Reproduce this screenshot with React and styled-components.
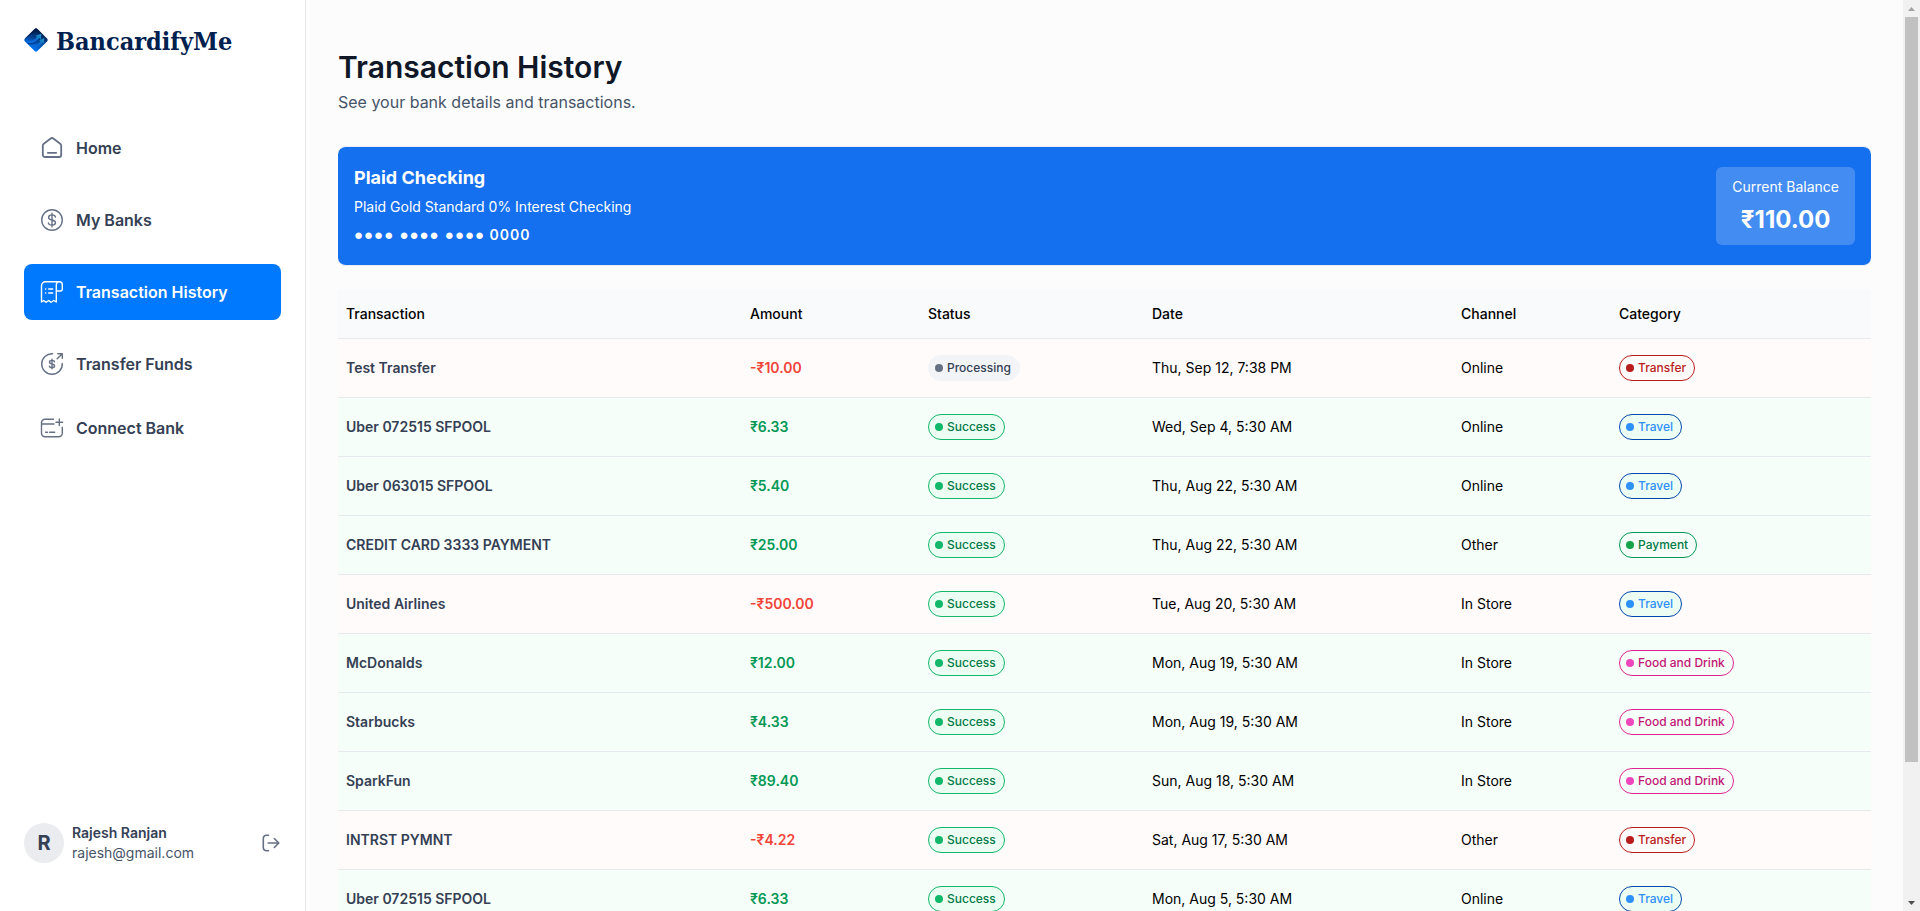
import React from "react";
import styled, { createGlobalStyle, css } from "styled-components";

const GlobalStyle = createGlobalStyle`
  *, *::before, *::after { box-sizing: border-box; }
  body {
    margin: 0;
    background: #ffffff;
    font-family: Inter, "Liberation Sans", sans-serif;
    color: #101828;
  }
  h1, h2, p { margin: 0; }
  button { font: inherit; color: inherit; border: 0; background: none; padding: 0; cursor: pointer; }
`;

const Layout = styled.div`
  display: flex;
  height: 100vh;
  overflow: hidden;
`;

const Sidebar = styled.aside`
  display: flex;
  flex-direction: column;
  flex: none;
  width: 306px;
  padding: 24px;
  border-right: 1px solid #e5e7eb;
  background: #ffffff;
`;

const Brand = styled.a`
  display: flex;
  align-items: center;
  gap: 8px;
  height: 36px;
  color: #00214f;
  text-decoration: none;
`;

const BrandMark = styled.svg`
  width: 24px;
  height: 28px;
  padding-bottom: 4px;
`;

const BrandName = styled.span`
  font: bold 25px/36px "DejaVu Serif Condensed", "DejaVu Serif", serif;
`;

const Nav = styled.nav`
  display: flex;
  flex-direction: column;
  gap: 16px;
  margin-top: 60px;
`;

const navItem = css`
  display: flex;
  align-items: center;
  gap: 12px;
  padding: 0 16px;
  border-radius: 8px;
  font-size: 16px;
  font-weight: 600;
  line-height: 24px;
  color: #344054;
  svg { flex: none; width: 24px; height: 24px; color: #667085; }
`;

const NavLink = styled.a`
  ${navItem}
  height: 56px;
  text-decoration: none;
  ${({ $active }) => $active && css`
    background: #0179fe;
    color: #ffffff;
    svg { color: #ffffff; }
  `}
`;

const NavButton = styled.button`
  && { ${navItem} }
  height: 40px;
`;

const Profile = styled.footer`
  display: flex;
  align-items: center;
  gap: 8px;
  margin-top: auto;
  padding-bottom: 24px;
`;

const Avatar = styled.div`
  display: grid;
  place-items: center;
  width: 40px;
  height: 40px;
  border-radius: 50%;
  background: #eaecf0;
  font-size: 20px;
  font-weight: 700;
  color: #344054;
`;

const ProfileText = styled.div`
  flex: 1;
  font-size: 14px;
  line-height: 20px;
  color: #475467;
`;

const ProfileName = styled.p`
  font-weight: 600;
  color: #344054;
`;

const LogoutButton = styled.button`
  display: flex;
  color: #667085;
  svg { width: 20px; height: 20px; }
`;

const Main = styled.main`
  flex: 1;
  min-width: 0;
  overflow-y: auto;
  scrollbar-width: none;
  padding: 48px 32px;
  background: #fcfcfd;
`;

const Title = styled.h1`
  font-size: 30px;
  font-weight: 600;
  line-height: 38px;
`;

const Subtitle = styled.p`
  margin-top: 4px;
  font-size: 16px;
  line-height: 24px;
  color: #475467;
`;

const AccountCard = styled.section`
  display: flex;
  align-items: center;
  justify-content: space-between;
  margin: 32px 0 24px;
  padding: 20px 16px;
  border: solid #eaecf0;
  border-width: 1px 0;
  border-radius: 8px;
  background: #1570ef;
  color: #ffffff;
  font-size: 14px;
`;

const AccountText = styled.div`
  display: flex;
  flex-direction: column;
  gap: 8px;
  line-height: 20px;
`;

const AccountName = styled.h2`
  font-size: 18px;
  font-weight: 700;
  line-height: 22px;
`;

const AccountNumber = styled.p`
  font-weight: 600;
  letter-spacing: 1px;
`;

const MaskedDigits = styled.span`
  font-family: "Liberation Sans", sans-serif;
  font-size: 15px;
`;

const Balance = styled.div`
  display: flex;
  flex-direction: column;
  align-items: center;
  gap: 8px;
  padding: 10px 16px;
  border-radius: 6px;
  background: rgba(255, 255, 255, 0.2);
  line-height: 20px;
`;

const BalanceAmount = styled.p`
  font-size: 24px;
  font-weight: 700;
  line-height: 30px;
`;

const Table = styled.table`
  width: 100%;
  table-layout: fixed;
  border-collapse: collapse;
  font-size: 14px;
  line-height: 20px;
  color: #000000;
`;

const HeadCell = styled.th`
  height: 48px;
  padding: 0 8px;
  border-bottom: 1px solid #e7e9ee;
  background: #f9fafb;
  font-weight: 500;
  text-align: left;
`;

const Row = styled.tr`
  background: ${({ $debit }) => ($debit ? "#fffbfa" : "#f6fef9")};
  border-bottom: 1px solid #e7e9ee;
`;

const Cell = styled.td`
  height: 59px;
  padding: 0 8px;
`;

const NameCell = styled(Cell)`
  font-weight: 600;
  color: #344054;
`;

const AmountCell = styled(Cell)`
  font-weight: 600;
  color: ${({ $debit }) => ($debit ? "#f04438" : "#039855")};
`;

const badgeTones = {
  Processing: { border: "#f2f4f7", fill: "#f2f4f7", dot: "#667085", text: "#344054" },
  Success: { border: "#12b76a", fill: "#ecfdf3", dot: "#12b76a", text: "#027a48" },
  Transfer: { border: "#b91c1c", fill: "transparent", dot: "#b91c1c", text: "#b91c1c" },
  Travel: { border: "#0047ab", fill: "#ecfdf3", dot: "#2e90fa", text: "#2e90fa" },
  Payment: { border: "#039855", fill: "transparent", dot: "#16a34a", text: "#027a48" },
  "Food and Drink": { border: "#dd2590", fill: "transparent", dot: "#ee46bc", text: "#c11574" },
};

const BadgeShell = styled.span`
  display: flex;
  align-items: center;
  gap: 4px;
  width: fit-content;
  padding: 3px 8px 3px 6px;
  border: 1px solid ${({ $tone }) => $tone.border};
  border-radius: 16px;
  background: ${({ $tone }) => $tone.fill};
  color: ${({ $tone }) => $tone.text};
  font-size: 12px;
  font-weight: 500;
  line-height: 18px;
  &::before {
    content: "";
    width: 8px;
    height: 8px;
    border-radius: 50%;
    background: ${({ $tone }) => $tone.dot};
  }
`;

const Scrollbar = styled.div`
  display: flex;
  flex-direction: column;
  flex: none;
  width: 17px;
  background: #f1f1f1;
`;

const ScrollArrow = styled.button`
  display: grid;
  place-items: center;
  height: 17px;
  svg { width: 7px; height: 4px; fill: ${({ $off }) => ($off ? "#a3a3a3" : "#505050")}; }
`;

const ScrollTrack = styled.div`
  flex: 1;
  padding: 0 2px;
`;

const ScrollThumb = styled.div`
  height: 85%;
  background: #c1c1c1;
`;

const Badge = ({ label }) => <BadgeShell $tone={badgeTones[label]}>{label}</BadgeShell>;

const Icon = ({ children, ...rest }) => (
  <svg viewBox="0 0 24 24" fill="none" stroke="currentColor" strokeWidth="1.5" strokeLinecap="round" strokeLinejoin="round" aria-hidden="true" {...rest}>
    {children}
  </svg>
);

const HomeIcon = () => (
  <Icon strokeWidth="1.8">
    <path d="M2.8 9.7c0-.8.4-1.5 1-2L10.7 2.5a2.2 2.2 0 0 1 2.600 0L20.2 7.7c.6.5 1 1.200 1 2V19a2 2 0 0 1-2 2H4.800a2 2 0 0 1-2-2z" />
    <path d="M7.8 16.8h8.4" />
  </Icon>
);

const DollarIcon = () => (
  <Icon strokeWidth="1.4">
    <circle cx="12" cy="12" r="10.3" />
    <path d="M15.4 9c-.2-1.300-1.300-2.100-3.400-2.100s-3.400.9-3.400 2.500 1.200 2.200 3.400 2.600 3.500 1 3.500 2.600-1.400 2.600-3.500 2.600-3.400-.9-3.600-2.200M12 5.300v13.400" />
  </Icon>
);

const ReceiptIcon = () => (
  <Icon strokeWidth="1.4">
    <path d="M19.3 1.7H5.5a4 4 0 0 0-4 4V22l2.200-1.500L6 22.300l2.600-1.800 2.600 1.800 2.500-1.800L16.300 22V4.700a3 3 0 0 1 6 0V9a2 2 0 0 1-2 2h-4" />
    <path d="M5.6 9h.2M5.6 13h.2M8.7 9h4M8.7 13h4" />
  </Icon>
);

const TransferIcon = () => (
  <Icon strokeWidth="1.4">
    <path d="M12.5 1.7A10.3 10.3 0 1 0 22.300 11.500M17.200 6.800l5.100-5.100M17.800 1.700h4.500v4.500" />
    <path d="M14.5 9.8c-.1-.9-1-1.400-2.500-1.400s-2.500.6-2.500 1.700.9 1.600 2.500 1.900 2.600.7 2.600 1.900-1 1.700-2.600 1.700-2.500-.6-2.600-1.500M12 7.200v9.600" />
  </Icon>
);

const ConnectIcon = () => (
  <Icon strokeWidth="1.4">
    <path d="M13.5 3.2H5a3.500 3.500 0 0 0-3.500 3.500v10.600A3.500 3.500 0 0 0 5 20.800h13.800a3.500 3.500 0 0 0 3.500-3.500v-6M1.500 8h12.500M19.300 3v6.600M16 6.300h6.600M5.600 16.300h2M9.700 16.300h5" />
  </Icon>
);

const LogoutIcon = () => (
  <Icon viewBox="0 0 20 20" strokeWidth="1.6">
    <path d="M7.5 2.3H5.3a3 3 0 0 0-3 3v9.400a3 3 0 0 0 3 3h2.200M7.200 10h10.600M13.300 5.500l4.500 4.500-4.500 4.500" />
  </Icon>
);

const Logo = () => (
  <BrandMark viewBox="0 0 24 24" aria-hidden="true">
    <defs>
      <linearGradient id="mark" x1="0.7" y1="0.1" x2="0.3" y2="0.9">
        <stop offset="0" stopColor="#00183f" />
        <stop offset="0.45" stopColor="#01408f" />
        <stop offset="1" stopColor="#0179fe" />
      </linearGradient>
      <linearGradient id="arrow" x1="0" y1="1" x2="1" y2="0">
        <stop offset="0" stopColor="#0a6be6" />
        <stop offset="0.5" stopColor="#0a66cc" />
        <stop offset="1" stopColor="#1f9cc0" />
      </linearGradient>
      <clipPath id="diamond">
        <rect x="3.2" y="3.2" width="17.6" height="17.6" rx="2" transform="rotate(45 12 12)" />
      </clipPath>
    </defs>
    <g clipPath="url(#diamond)">
      <path d="M0 0h24v24H0z" fill="url(#mark)" />
      <path d="M0 0h24v9L12 3.500 1 11z" fill="#001b47" opacity=".7" />
      <path d="M2 12c4 1.500 8 .5 11-3.200l-1.600-1 6-2-.5 5.800-1.500-1.200C12 15 8 16 4 14.500z" fill="url(#arrow)" />
      <path d="M7 17c4 1 7-.5 9.500-3.700l-1.500-1 5.200-2-.4 5.400-1.400-1.100c-2.500 3.700-5.300 5.400-9.400 5z" fill="url(#arrow)" />
      <path d="M4 15.500c4.500 1 8-.5 11.500-5" fill="none" stroke="#00347d" strokeWidth="1" />
    </g>
  </BrandMark>
);

const navLinks = [
  { label: "Home", icon: <HomeIcon /> },
  { label: "My Banks", icon: <DollarIcon /> },
  { label: "Transaction History", icon: <ReceiptIcon />, active: true },
  { label: "Transfer Funds", icon: <TransferIcon /> },
];

const columns = [
  ["Transaction", 404],
  ["Amount", 178],
  ["Status", 224],
  ["Date", 309],
  ["Channel", 158],
  ["Category", 260],
];

const transactions = [
  ["Test Transfer", "-₹10.00", "Processing", "Thu, Sep 12, 7:38 PM", "Online", "Transfer"],
  ["Uber 072515 SFPOOL", "₹6.33", "Success", "Wed, Sep 4, 5:30 AM", "Online", "Travel"],
  ["Uber 063015 SFPOOL", "₹5.40", "Success", "Thu, Aug 22, 5:30 AM", "Online", "Travel"],
  ["CREDIT CARD 3333 PAYMENT", "₹25.00", "Success", "Thu, Aug 22, 5:30 AM", "Other", "Payment"],
  ["United Airlines", "-₹500.00", "Success", "Tue, Aug 20, 5:30 AM", "In Store", "Travel"],
  ["McDonalds", "₹12.00", "Success", "Mon, Aug 19, 5:30 AM", "In Store", "Food and Drink"],
  ["Starbucks", "₹4.33", "Success", "Mon, Aug 19, 5:30 AM", "In Store", "Food and Drink"],
  ["SparkFun", "₹89.40", "Success", "Sun, Aug 18, 5:30 AM", "In Store", "Food and Drink"],
  ["INTRST PYMNT", "-₹4.22", "Success", "Sat, Aug 17, 5:30 AM", "Other", "Transfer"],
  ["Uber 072515 SFPOOL", "₹6.33", "Success", "Mon, Aug 5, 5:30 AM", "Online", "Travel"],
];

const Col = styled.col`
  width: ${({ $width }) => $width}px;
`;

export default function App() {
  return (
    <>
      <GlobalStyle />
      <Layout>
        <Sidebar>
          <Brand href="#">
            <Logo />
            <BrandName>BancardifyMe</BrandName>
          </Brand>
          <Nav>
            {navLinks.map(({ label, icon, active }) => (
              <NavLink key={label} href="#" $active={active} aria-current={active ? "page" : undefined}>
                {icon}
                {label}
              </NavLink>
            ))}
            <NavButton type="button">
              <ConnectIcon />
              Connect Bank
            </NavButton>
          </Nav>
          <Profile>
            <Avatar>R</Avatar>
            <ProfileText>
              <ProfileName>Rajesh Ranjan</ProfileName>
              <p>rajesh@gmail.com</p>
            </ProfileText>
            <LogoutButton type="button" aria-label="Log out">
              <LogoutIcon />
            </LogoutButton>
          </Profile>
        </Sidebar>
        <Main>
          <Title>Transaction History</Title>
          <Subtitle>See your bank details and transactions.</Subtitle>
          <AccountCard>
            <AccountText>
              <AccountName>Plaid Checking</AccountName>
              <p>Plaid Gold Standard 0% Interest Checking</p>
              <AccountNumber>
                <MaskedDigits>●●●● ●●●● ●●●●</MaskedDigits> 0000
              </AccountNumber>
            </AccountText>
            <Balance>
              <p>Current Balance</p>
              <BalanceAmount>₹110.00</BalanceAmount>
            </Balance>
          </AccountCard>
          <Table>
            <colgroup>
              {columns.map(([name, width]) => (
                <Col key={name} $width={width} />
              ))}
            </colgroup>
            <thead>
              <tr>
                {columns.map(([name]) => (
                  <HeadCell key={name} scope="col">{name}</HeadCell>
                ))}
              </tr>
            </thead>
            <tbody>
              {transactions.map(([name, amount, status, date, channel, category], index) => {
                const debit = amount.startsWith("-");
                return (
                  <Row key={index} $debit={debit}>
                    <NameCell>{name}</NameCell>
                    <AmountCell $debit={debit}>{amount}</AmountCell>
                    <Cell><Badge label={status} /></Cell>
                    <Cell>{date}</Cell>
                    <Cell>{channel}</Cell>
                    <Cell><Badge label={category} /></Cell>
                  </Row>
                );
              })}
            </tbody>
          </Table>
        </Main>
        <Scrollbar>
          <ScrollArrow type="button" aria-label="Scroll up" $off>
            <svg viewBox="0 0 7 4"><path d="M0 4L3.500 0 7 4z" /></svg>
          </ScrollArrow>
          <ScrollTrack>
            <ScrollThumb />
          </ScrollTrack>
          <ScrollArrow type="button" aria-label="Scroll down">
            <svg viewBox="0 0 7 4"><path d="M0 0l3.500 4L7 0z" /></svg>
          </ScrollArrow>
        </Scrollbar>
      </Layout>
    </>
  );
}
